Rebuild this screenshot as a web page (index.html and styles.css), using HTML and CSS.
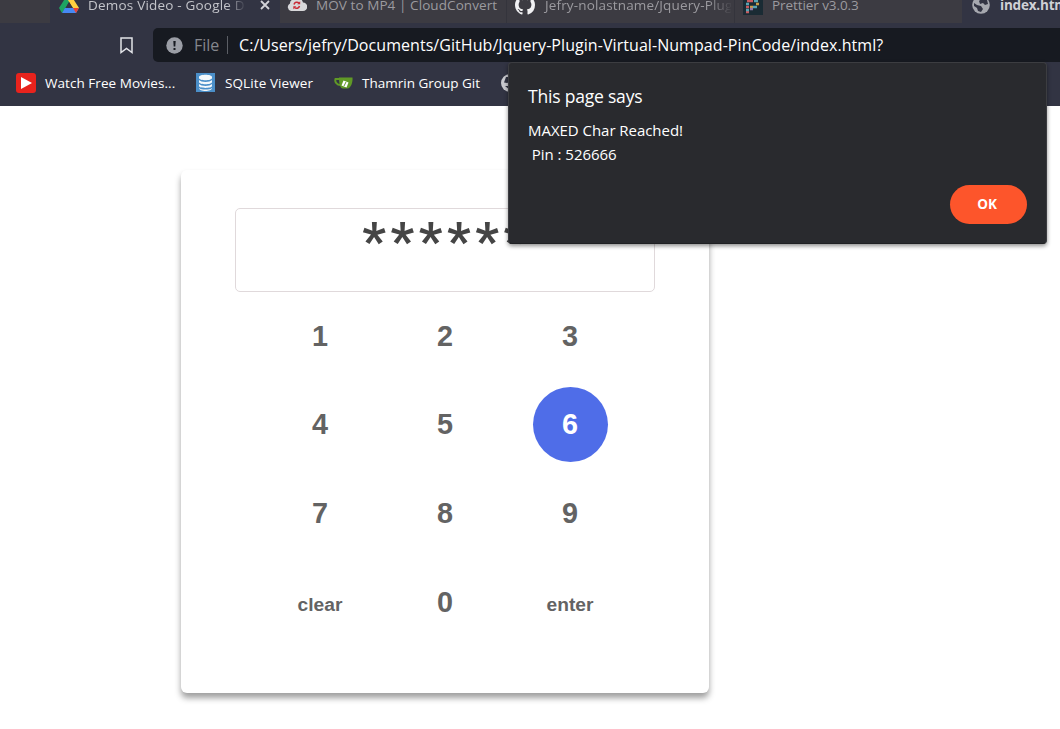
FILE: index.html
```html
<!DOCTYPE html>
<html lang="en">
<head>
<meta charset="utf-8">
<title>index.html</title>
<link rel="stylesheet" href="styles.css">
</head>
<body>
<header class="browser">
  <div class="tabs">
    <div class="tab tab-edge"></div>
    <div class="tab tab-drive">
      <svg class="icon" width="20" height="18" viewBox="0 0 20 18"><path fill="#1da462" d="M7 1h6L6 13l-3 4-3-5z"/><path fill="#ffcf40" d="M7 1h6l7 11h-6z"/><path fill="#4688f4" d="M6 12h14l-3 5H3z"/><path fill="#323443" d="M10 6l3.5 6h-7z"/><path fill="#ea4335" d="M14 12h6l-3 5z"/></svg>
      <span class="label t-demos">Demos Video - Google D</span>
      <svg class="close" width="10" height="10" viewBox="0 0 10 10"><path d="M1 1l8 8M9 1L1 9" stroke="#d2d2d8" stroke-width="1.800"/></svg>
    </div>
    <div class="tab tab-cloud">
      <svg class="icon" width="20" height="18" viewBox="0 0 20 18"><path fill="#d8d8da" d="M4 17a4 4 0 0 1-1-7.500 4 4 0 0 1 3-4 6 6 0 0 1 10 3 4.200 4.200 0 0 1 0 8.500z"/><path d="M7 10.500a3 3 0 0 1 5-1.500M12.500 12a3 3 0 0 1-5 1.500" fill="none" stroke="#c92a35" stroke-width="1.500"/><path fill="#c92a35" d="M13.200 7.200v3h-3zM6.300 15.200v-3h3z"/></svg>
      <span class="label t-mov">MOV to MP4 | CloudConvert</span>
    </div>
    <div class="tab tab-github">
      <svg class="icon" width="20" height="20" viewBox="0 0 16 16"><path fill="#f1f1f3" d="M8 0C3.580 0 0 3.580 0 8c0 3.540 2.290 6.530 5.470 7.590.4.070.55-.17.55-.38 0-.19-.01-.82-.01-1.490-2.010.37-2.530-.49-2.690-.94-.09-.23-.48-.94-.82-1.130-.28-.15-.68-.52-.01-.53.63-.01 1.080.58 1.230.82.72 1.210 1.870.87 2.330.66.070-.52.28-.87.51-1.070-1.780-.2-3.640-.89-3.640-3.950 0-.87.31-1.590.82-2.150-.08-.2-.36-1.020.08-2.120 0 0 .67-.21 2.200.82a7.600 7.600 0 0 1 4 0c1.530-1.040 2.200-.82 2.200-.82.44 1.100.16 1.920.08 2.120.51.56.82 1.270.82 2.150 0 3.070-1.870 3.750-3.650 3.950.29.25.54.73.54 1.480 0 1.070-.01 1.930-.01 2.200 0 .21.15.46.55.38A8 8 0 0 0 16 8c0-4.420-3.580-8-8-8z"/></svg>
      <span class="label t-jefry">Jefry-nolastname/Jquery-Plug</span>
    </div>
    <div class="tab tab-prettier">
      <svg class="icon" width="20" height="20" viewBox="0 0 20 20"><path fill="#1a2b34" d="M0 0h20v20H0z"/><g stroke-width="2.500" fill="none"><path stroke="#c95a5e" d="M4 6h6M3 12h3M3 17h3"/><path stroke="#56a3b4" d="M11 6h4M3 9h3M10 12h4M3 15h3"/><path stroke="#c79a45" d="M7 12h3M13 9h3"/><path stroke="#8f75a5" d="M7 14h3"/></g></svg>
      <span class="label t-prettier">Prettier v3.0.3</span>
    </div>
    <div class="tab tab-index">
      <svg class="icon" width="18" height="18" viewBox="0 0 18 18"><circle cx="9" cy="9" r="8.800" fill="#a6a8af"/><path fill="#323443" d="M10 2l5 2 1 4-3 1-2-2-3 1-1-3zM2 7l3 2 4 1 2 3-2 3-3-1-1-3-3-2z"/></svg>
      <span class="label t-index">index.html</span>
    </div>
  </div>
  <div class="toolbar">
    <svg class="bookmark" width="13" height="17" viewBox="0 0 13 17"><path d="M1 1h11v14.500l-5.500-4L1 15.500z" fill="none" stroke="#e2e3e8" stroke-width="1.500"/></svg>
    <div class="address">
      <svg width="17" height="17" viewBox="0 0 17 17"><circle cx="8.500" cy="8.500" r="8.200" fill="#9b9ea6"/><path fill="#171a21" d="M7.300 4h2.400l-.4 5.500H7.700zM7.500 11h2v2h-2z"/></svg>
      <span class="scheme">File</span>
      <span class="divider"></span>
      <span class="url">C:/Users/jefry/Documents/GitHub/Jquery-Plugin-Virtual-Numpad-PinCode/index.html?</span>
    </div>
  </div>
  <div class="bookmarks">
    <svg class="fav" width="20" height="20" viewBox="0 0 20 20"><rect width="20" height="20" rx="3" fill="#e8231d"/><path fill="#fff" d="M5 4l11 6-11 6z"/></svg>
    <span class="b-label b-watch">Watch Free Movies...</span>
    <svg class="fav" width="19" height="19" viewBox="0 0 19 19"><path fill="#4b8fc9" d="M0 0h19v19H0z"/><path fill="#f4f8fb" d="M3 4c0-3 13-3 13 0v1c0 3-13 3-13 0zM3 7c2 2.500 11 2.500 13 0v2c0 3-13 3-13 0zM3 11c2 2.500 11 2.500 13 0v2c0 2.500-13 2.500-13 0zM3 15c2 2 11 2 13 0 0 4-13 4-13 0z"/></svg>
    <span class="b-label b-sqlite">SQLite Viewer</span>
    <svg class="fav" width="19" height="14" viewBox="0 0 19 14"><path d="M6 3H1.500c-1 3 1.500 6 5 6" fill="none" stroke="#609926" stroke-width="2"/><path fill="#609926" d="M5 1.500h13.500c.5 5-2 11-5 11H9c-3 0-4-5-4-11z"/><path fill="#fff" d="M9.500 4.500l5 2-2 5-5-2z"/><path stroke="#609926" d="M12 6l-2 4"/></svg>
    <span class="b-label b-git">Thamrin Group Git</span>
    <svg class="fav" width="18" height="18" viewBox="0 0 18 18"><circle cx="9" cy="9" r="9" fill="#c9cacf"/><path fill="#323443" d="M5 3l4 0v5L6 9 3 8.500zM4 12h5v4z"/></svg>
  </div>
</header>
<main class="page">
  <section class="card">
    <div class="pin">******</div>
    <div class="keys">
      <button>1</button><button>2</button><button>3</button>
      <button>4</button><button>5</button><button class="pressed">6</button>
      <button>7</button><button>8</button><button>9</button>
      <button class="word">clear</button><button>0</button><button class="word">enter</button>
    </div>
  </section>
</main>
<div class="dialog" role="alertdialog">
  <div class="title"><span>This page says</span></div>
  <div class="message"><span class="m1">MAXED Char Reached!</span><br><span class="m2">&nbsp;Pin : 526666</span></div>
  <button class="ok">OK</button>
</div>
</body>
</html>
```
FILE: styles.css
```css
* { box-sizing: border-box; }
body { margin: 0; height: 729px; overflow: hidden; background: #fff; position: relative; font-family: "Open Sans", "Noto Sans", sans-serif; }
svg { display: block; flex: none; }
button { border: 0; padding: 0; background: none; font: inherit; color: inherit; }
.browser { height: 106px; background: #323443; overflow: hidden; }
.tabs { display: flex; height: 23px; overflow: hidden; }
.tab { flex: none; display: flex; align-items: center; height: 23px; padding-bottom: 13px; background: #3c3b42; color: #9b9a9f; font-size: 13.5px; line-height: 18px; white-space: nowrap; overflow: hidden; }
.label { flex: none; }
.tab-edge { width: 50px; }
.tab-drive { width: 230px; background: #323443; color: #c3c4ca; padding-left: 9px; }
.tab-drive .icon { margin-top: -1px; }
.t-demos { width: 158px; margin-left: 9px; letter-spacing: .2px; -webkit-mask-image: linear-gradient(90deg, #000 88%, transparent); }
.close { margin-left: 14px; }
.tab-cloud { width: 227px; padding-left: 7px; border-right: 1px solid #34343c; }
.tab-cloud .icon { margin-top: -4px; }
.t-mov { margin-left: 9px; letter-spacing: .08px; }
.tab-github { width: 228px; padding-left: 8px; border-right: 1px solid #34343c; }
.t-jefry { margin-left: 8px; padding-left: 2px; width: 188px; letter-spacing: .15px; -webkit-mask-image: linear-gradient(90deg, #000 88%, transparent 101%); }
.tab-prettier { width: 227px; padding-left: 8px; }
.t-prettier { margin-left: 9px; letter-spacing: -.08px; }
.tab-index { width: 98px; background: #323443; color: #d0d1d6; padding-left: 10px; }
.t-index { margin-left: 10px; font-weight: 700; letter-spacing: -.2px; }
.toolbar { display: flex; height: 44px; padding-top: 5px; }
.bookmark { margin: 9px 0 0 120px; }
.address { flex: 1; margin-left: 20px; height: 34px; border-radius: 5px 0 0 5px; background: #171a21; display: flex; align-items: center; padding-left: 13px; font-size: 16px; white-space: nowrap; }
.scheme { width: 33px; margin-left: 11px; color: #85878d; }
.divider { width: 1px; height: 18px; background: #5b5e65; }
.url { margin-left: 11px; color: #fff; letter-spacing: .06px; }
.bookmarks { display: flex; align-items: center; height: 31px; padding-left: 16px; color: #fff; font-size: 13.5px; white-space: nowrap; }
.b-label { flex: none; margin-left: 9px; }
.b-watch { width: 151px; letter-spacing: .05px; }
.b-sqlite { width: 109px; margin-left: 10px; letter-spacing: .1px; }
.b-git { width: 139px; margin-left: 9px; }
.page { padding: 64px 0 0 181px; }
.card { width: 528px; height: 523px; border-radius: 6px; background: #fff; box-shadow: 0 5px 6px rgba(0, 0, 0, .38); padding: 38px 54px 0; font-family: "Liberation Sans", Arial, sans-serif; font-weight: 700; }
.pin { width: 420px; height: 84px; padding-left: 4px; border: 1px solid #e0d9db; border-radius: 5px; color: #454545; text-align: center; font-family: Roboto, sans-serif; font-size: 52px; letter-spacing: 4.600px; line-height: 66px; overflow: hidden; }
.keys { display: grid; grid-template-columns: repeat(3, 75px); column-gap: 50px; grid-auto-rows: 75px; row-gap: 13.7px; justify-content: center; margin-top: 6.8px; }
.keys button { border-radius: 50%; color: #636363; font-size: 28.8px; line-height: 75px; }
.keys .word { font-size: 19.2px; padding-top: 2px; }
.keys .pressed { background: #4f6de8; color: #fff; }
.dialog { position: absolute; left: 508px; top: 62px; width: 539px; height: 182px; padding: 22px 20px 0; border: 1px solid #3c3d41; border-bottom-color: #1f2023; border-radius: 4px; background: #292a2e; color: #fff; box-shadow: 0 2px 4px rgba(0, 0, 0, .45); display: flex; flex-direction: column; }
.title { height: 22px; line-height: 22px; font-size: 17.5px; letter-spacing: -.2px; }
.message { margin-top: 11px; font-size: 15px; line-height: 24px; letter-spacing: -.04px; }
.title, .message { margin-left: -1px; }
.ok { align-self: flex-end; margin-top: 19px; margin-right: -1px; padding: 0 3px 2px 0; width: 77px; height: 39px; border-radius: 20px; background: #fd552b; color: #fff; font-size: 13.5px; font-weight: 700; }
```
